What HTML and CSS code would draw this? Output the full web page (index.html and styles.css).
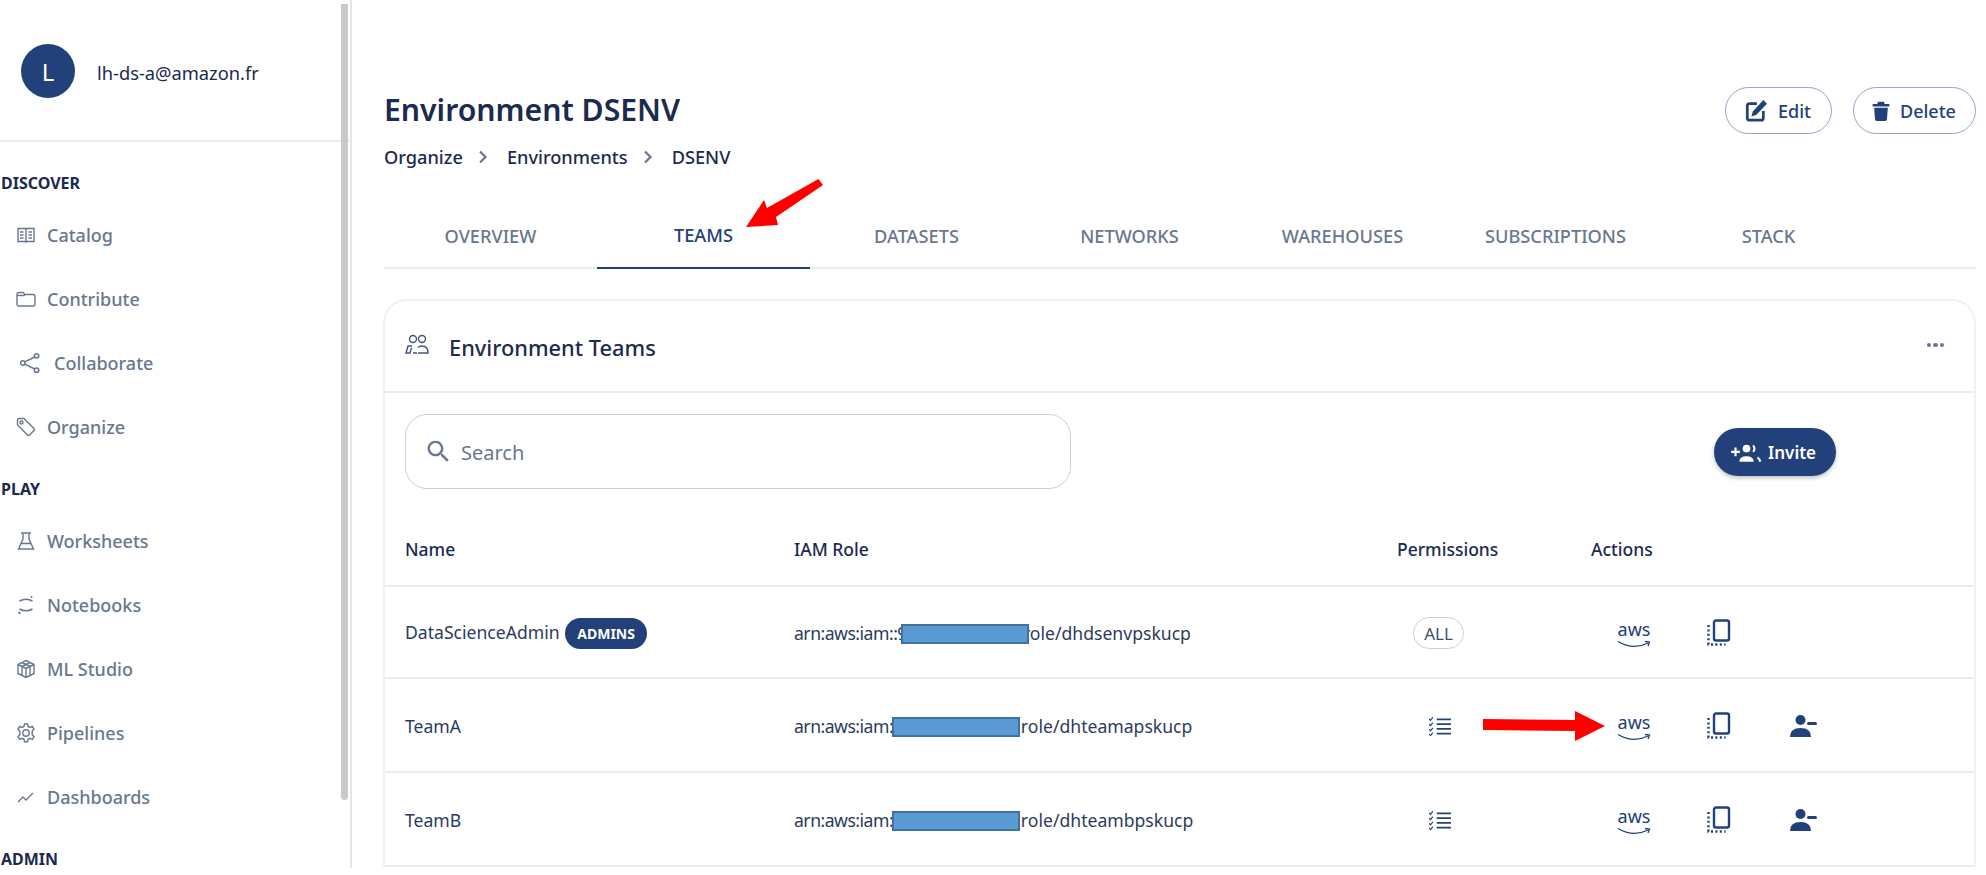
FILE: index.html
```html
<!DOCTYPE html>
<html lang="en">
<head>
  <meta charset="UTF-8">
  <meta name="viewport" content="width=device-width, initial-scale=1.0">
  <title>Environment DSENV</title>
  <link rel="stylesheet" href="styles.css">
</head>
<body>
  <div class="app">
    <aside class="sidebar">
      <div class="user">
        <div class="avatar">L</div>
        <span class="user-email">lh-ds-a@amazon.fr</span>
      </div>
      <nav class="side-nav">
        <h4 class="nav-label">DISCOVER</h4>
        <a class="nav-item">
          <svg class="nav-icon" viewBox="0 0 20 20"><path d="M2 3.500h7.500l.5.6.5-.6H18v13h-7.500l-.5.6-.5-.6H2zM10 4v12.500"/><path d="M4 7h3.500M4 10h3.500M4 13h3.500M12.500 7H16M12.500 10H16M12.500 13H16" stroke-width="1.600"/></svg>
          Catalog
        </a>
        <a class="nav-item">
          <svg class="nav-icon" viewBox="0 0 20 20"><path d="M1 5.500q0-2 2-2h4l2 2h8q2 0 2 2v7.500q0 2-2 2H3q-2 0-2-2z"/><path d="M1 6.500h8"/></svg>
          Contribute
        </a>
        <a class="nav-item nav-item-wide">
          <svg class="nav-icon" viewBox="0 0 20 20"><circle cx="3.500" cy="10" r="2"/><circle cx="16" cy="3.500" r="2"/><circle cx="16" cy="16.500" r="2"/><path d="M5.300 9l9-4.500M5.300 11l9 4.500"/></svg>
          Collaborate
        </a>
        <a class="nav-item">
          <svg class="nav-icon" viewBox="0 0 20 20"><path d="M1.500 3q0-1.500 1.500-1.500h5l10 10q1 1 0 2l-4.500 4.500q-1 1-2 0l-10-10z"/><circle cx="5.500" cy="5.500" r="1.500"/></svg>
          Organize
        </a>
        <h4 class="nav-label">PLAY</h4>
        <a class="nav-item">
          <svg class="nav-icon" viewBox="0 0 20 20"><path d="M5 2h10M7 2v6l-4.500 10h15L13 8V2M5 12.500h10"/></svg>
          Worksheets
        </a>
        <a class="nav-item">
          <svg class="nav-icon" viewBox="0 0 20 20"><path d="M3.500 6q6.500-3.500 13 0M3.500 14q6.500 3.500 13 0" stroke-width="1.700"/><circle class="dot" cx="15.500" cy="2" r="1"/><circle class="dot" cx="3.500" cy="18" r="1.200"/></svg>
          Notebooks
        </a>
        <a class="nav-item">
          <svg class="nav-icon" viewBox="0 0 20 20" stroke-width="1.700"><path d="M10 1.500l8 4v9l-8 4-8-4v-9zM2 5.500l8 4 8-4M10 9.500v9M6 3.500l8 4M14 3.500l-8 4M6 7.500v9M14 7.500v9"/></svg>
          ML Studio
        </a>
        <a class="nav-item">
          <svg class="nav-icon" viewBox="0 0 20 20"><circle cx="10" cy="10" r="3.200"/><path d="M8.500 1h3l.5 2.500 2 1 2.300-1 1.700 2.600-1.800 1.900v3.800l1.800 1.900-1.700 2.600-2.300-1-2 1-.5 2.500h-3l-.5-2.500-2-1-2.300 1-1.700-2.600 1.800-1.900V8L2 6.100l1.700-2.600 2.300 1 2-1z"/></svg>
          Pipelines
        </a>
        <a class="nav-item">
          <svg class="nav-icon" viewBox="0 0 20 20" stroke-width="1.600"><path d="M2 15l5-5 3 3 7-7"/></svg>
          Dashboards
        </a>
        <h4 class="nav-label">ADMIN</h4>
      </nav>
      <div class="scroll-thumb"></div>
    </aside>

    <main class="content">
      <div class="page-head">
        <div>
          <h1 class="page-title">Environment DSENV</h1>
          <div class="crumbs">
            <span>Organize</span>
            <svg class="crumb-sep" viewBox="0 0 10 14"><path d="M2 1.500L7.500 7 2 12.500"/></svg>
            <span>Environments</span>
            <svg class="crumb-sep" viewBox="0 0 10 14"><path d="M2 1.500L7.500 7 2 12.500"/></svg>
            <span>DSENV</span>
          </div>
        </div>
        <div class="head-actions">
          <button class="btn-outline btn-edit">
            <svg class="btn-icon" viewBox="0 0 24 24"><path class="outline" d="M13 4H5q-2.500 0-2.500 2.500v13Q2.500 22 5 22h12.500q2.500 0 2.500-2.500V12"/><path d="M20 0l4 4-11.500 12L7 18l1.500-5.500z"/></svg>
            Edit
          </button>
          <button class="btn-outline btn-delete">
            <svg class="btn-icon" viewBox="0 0 24 24"><path d="M8.500 1h7l1 2.500H22v3H2v-3h5.500zM3.800 8h16.400l-1 14q-.1 2-2 2H6.800q-1.900 0-2-2z"/></svg>
            Delete
          </button>
        </div>
      </div>

      <div class="tabs">
        <a class="tab">OVERVIEW</a>
        <a class="tab tab-active">TEAMS</a>
        <a class="tab">DATASETS</a>
        <a class="tab">NETWORKS</a>
        <a class="tab">WAREHOUSES</a>
        <a class="tab">SUBSCRIPTIONS</a>
        <a class="tab">STACK</a>
      </div>

      <section class="card">
        <div class="card-head">
          <svg class="card-icon" viewBox="0 0 24 24"><circle cx="8" cy="6" r="3.500"/><circle cx="17" cy="6" r="3.500"/><path d="M13 20h10q0-7-6-7-2.500 0-4 1.500M7 13l-4 0-2 7h4l1.500-5M8 20h4"/></svg>
          <h3 class="card-title">Environment Teams</h3>
          <span class="card-more"><i></i><i></i><i></i></span>
        </div>
        <div class="toolbar">
          <div class="search">
            <svg class="search-icon" viewBox="0 0 24 24"><path d="M15.500 14h-.79l-.28-.27C15.410 12.590 16 11.110 16 9.500 16 5.910 13.090 3 9.500 3S3 5.910 3 9.500 5.910 16 9.500 16c1.610 0 3.090-.59 4.230-1.570l.27.28v.79l5 4.990L20.490 19l-4.990-5zm-6 0C7.010 14 5 11.990 5 9.500S7.010 5 9.500 5 14 7.010 14 9.500 11.990 14 9.500 14z"/></svg>
            <span>Search</span>
          </div>
          <button class="btn-invite">
            <svg class="invite-icon" viewBox="0 0 28 20"><path class="fill" d="M0 8h3V5h2v3h3v2H5v3H3v-3H0z"/><circle cx="14" cy="6" r="3.500"/><path d="M7.500 18q0-5 6.500-5t6.500 5z"/><path d="M20 3q2.500 3 0 6M24 14q2 1.500 2.500 4"/></svg>
            Invite
          </button>
        </div>
        <table class="teams">
          <colgroup>
            <col class="col-name"><col class="col-role"><col class="col-perm"><col>
          </colgroup>
          <thead>
            <tr><th>Name</th><th>IAM Role</th><th>Permissions</th><th>Actions</th></tr>
          </thead>
          <tbody>
            <tr>
              <td>DataScienceAdmin <span class="badge">ADMINS</span></td>
              <td><span class="arn">arn:aws:iam::9</span><span class="redact redact-first"></span>role/dhdsenvpskucp</td>
              <td class="perm"><span class="pill">ALL</span></td>
              <td>
                <div class="row-actions">
                  <span class="act"><svg class="aws" viewBox="-2 -8 38 34"><text x="17" y="12">aws</text><path d="M1 17.500q15 9 30 1.500"/><path d="M28 17.500l4.500.5-1.500 4"/></svg></span>
                  <span class="act"><svg class="copy" viewBox="0 0 24 28"><rect x="7" y="1.500" width="15" height="20" rx="2"/><path d="M1.500 6v19.500h17" stroke-dasharray="2 2.400"/></svg></span>
                </div>
              </td>
            </tr>
            <tr>
              <td>TeamA</td>
              <td><span class="arn">arn:aws:iam:</span><span class="redact"></span>:role/dhteamapskucp</td>
              <td class="perm">
                <svg class="checks" viewBox="0 0 24 20"><path d="M0 2l1.500 1.500L4 .5M0 7.500L1.500 9 4 6M0 13l1.500 1.500L4 11.500M0 18l1.500 1.500L4 16.500" stroke-width="1.300"/><path d="M8 2.500h15M8 7.500h15M8 12.500h15M8 17.500h15" stroke-width="1.800"/></svg>
              </td>
              <td>
                <div class="row-actions">
                  <span class="act"><svg class="aws" viewBox="-2 -8 38 34"><text x="17" y="12">aws</text><path d="M1 17.500q15 9 30 1.500"/><path d="M28 17.500l4.500.5-1.500 4"/></svg></span>
                  <span class="act"><svg class="copy" viewBox="0 0 24 28"><rect x="7" y="1.500" width="15" height="20" rx="2"/><path d="M1.500 6v19.500h17" stroke-dasharray="2 2.400"/></svg></span>
                  <span class="act"><svg class="person" viewBox="0 0 28 24"><circle cx="10.500" cy="6" r="5"/><path d="M0 23q0-9 10.500-9T21 23z"/><rect x="17" y="8" width="10" height="3" rx="1.500"/></svg></span>
                </div>
              </td>
            </tr>
            <tr>
              <td>TeamB</td>
              <td><span class="arn">arn:aws:iam:</span><span class="redact"></span>:role/dhteambpskucp</td>
              <td class="perm">
                <svg class="checks" viewBox="0 0 24 20"><path d="M0 2l1.500 1.500L4 .5M0 7.500L1.500 9 4 6M0 13l1.500 1.500L4 11.500M0 18l1.500 1.500L4 16.500" stroke-width="1.300"/><path d="M8 2.500h15M8 7.500h15M8 12.500h15M8 17.500h15" stroke-width="1.800"/></svg>
              </td>
              <td>
                <div class="row-actions">
                  <span class="act"><svg class="aws" viewBox="-2 -8 38 34"><text x="17" y="12">aws</text><path d="M1 17.500q15 9 30 1.500"/><path d="M28 17.500l4.500.5-1.500 4"/></svg></span>
                  <span class="act"><svg class="copy" viewBox="0 0 24 28"><rect x="7" y="1.500" width="15" height="20" rx="2"/><path d="M1.500 6v19.500h17" stroke-dasharray="2 2.400"/></svg></span>
                  <span class="act"><svg class="person" viewBox="0 0 28 24"><circle cx="10.500" cy="6" r="5"/><path d="M0 23q0-9 10.500-9T21 23z"/><rect x="17" y="8" width="10" height="3" rx="1.500"/></svg></span>
                </div>
              </td>
            </tr>
          </tbody>
        </table>
      </section>
    </main>

    <!-- red annotation arrows drawn on top of the screenshot -->
    <svg class="marks" viewBox="0 0 1986 875">
      <polygon points="746,227 764,200 767,208 818.500,179 823,185 776,217 778,225"/>
      <polygon points="1483,719 1575,720 1575,711 1605,726 1575,741 1575,731 1483,730"/>
    </svg>
  </div>
</body>
</html>
```

FILE: styles.css
```css
* {
  box-sizing: border-box;
}
html, body {
  margin: 0;
  padding: 0;
  height: 100%;
  overflow: hidden;
  background: #fff;
}
body {
  font-family: "Noto Sans", "Open Sans", sans-serif;
  color: #1b2a4e;
}
.app {
  position: relative;
  display: flex;
  align-items: flex-start;
  height: 875px;
  overflow: hidden;
}

/* sidebar */
.sidebar {
  position: relative;
  flex: 0 0 352px;
  height: 868px;
  border-right: 2px solid #e6e6e6;
}
.user {
  display: flex;
  align-items: center;
  height: 142px;
  padding-left: 21px;
  padding-top: 2px;
  border-bottom: 2px solid #ececec;
}
.avatar {
  display: flex;
  align-items: center;
  justify-content: center;
  width: 54px;
  height: 54px;
  border-radius: 50%;
  background: #224079;
  color: #fff;
  font-size: 24px;
}
.user-email {
  margin-left: 22px;
  margin-top: 2px;
  font-size: 18.300px;
}
.side-nav {
  padding-top: 21px;
}
.nav-label {
  display: flex;
  align-items: center;
  height: 40px;
  margin: 10px 0 0;
  padding-left: 1px;
  font-size: 16px;
  font-weight: 700;
}
.nav-label:first-child {
  margin-top: 0;
}
.nav-item {
  display: flex;
  align-items: center;
  height: 64px;
  padding-left: 16px;
  color: #68778f;
  font-size: 18px;
  font-weight: 500;
}
.nav-icon {
  flex: none;
  width: 20px;
  height: 20px;
  margin-right: 11px;
  fill: none;
  stroke: #68778f;
  stroke-width: 1.400;
}
.nav-icon .dot {
  fill: #68778f;
  stroke: none;
}
.nav-item-wide .nav-icon {
  width: 22px;
  height: 22px;
  margin-left: 3px;
  margin-right: 13px;
}
.scroll-thumb {
  position: absolute;
  top: 4px;
  left: 341px;
  width: 7px;
  height: 796px;
  border-radius: 0 0 4px 4px;
  background: #c9c9c9;
}

/* page head */
.content {
  flex: 1;
  min-width: 0;
  padding: 87px 10px 0 32px;
}
.page-head {
  display: flex;
  justify-content: space-between;
  align-items: flex-start;
}
.page-title {
  margin: 0;
  height: 47px;
  font-size: 30.200px;
  font-weight: 600;
  line-height: 45px;
}
.crumbs {
  display: flex;
  align-items: center;
  height: 46px;
  font-size: 18.200px;
  font-weight: 500;
}
.crumb-sep {
  width: 10px;
  height: 14px;
  margin: 0 19px 0 15px;
  fill: none;
  stroke: #68778f;
  stroke-width: 2.200;
}
.head-actions {
  display: flex;
  gap: 21px;
}
.btn-outline {
  display: flex;
  align-items: center;
  height: 47px;
  border: 1px solid #95a6c6;
  border-radius: 24px;
  background: #fff;
  color: #224079;
  font: 500 18px "Noto Sans", sans-serif;
}
.btn-edit {
  width: 107px;
  padding: 0 0 0 19px;
}
.btn-delete {
  width: 123px;
  padding: 0 0 0 17px;
}
.btn-icon {
  width: 22px;
  height: 22px;
  margin-right: 11px;
  fill: #224079;
}
.btn-delete .btn-icon {
  width: 20px;
  margin-right: 9px;
}
.btn-icon .outline {
  fill: none;
  stroke: #224079;
  stroke-width: 3;
}

/* tabs */
.tabs {
  display: flex;
  height: 65px;
  margin-top: 24px;
  border-bottom: 2px solid #ececec;
}
.tab {
  display: flex;
  align-items: center;
  justify-content: center;
  flex: 0 0 213px;
  height: 65px;
  padding-bottom: 2px;
  color: #68778f;
  font-size: 18.200px;
  font-weight: 500;
}
.tab-active {
  border-bottom: 2px solid #224079;
  color: #224079;
}

/* card */
.card {
  margin-top: 30px;
  margin-left: -1px;
  border: 2px solid #f1f1f1;
  border-bottom: 0;
  border-radius: 24px 24px 0 0;
}
.card-head {
  display: flex;
  align-items: center;
  height: 92px;
  padding: 2px 30px 0 20px;
  border-bottom: 2px solid #ececec;
}
.card-icon {
  width: 24px;
  height: 24px;
  margin-top: -4px;
  margin-right: 20px;
  fill: none;
  stroke: #42557a;
  stroke-width: 1.400;
}
.card-title {
  margin: 0;
  font-size: 21.800px;
  font-weight: 500;
}
.card-more {
  display: flex;
  gap: 2px;
  margin-left: auto;
  margin-top: -4px;
}
.card-more i {
  width: 4.500px;
  height: 4.500px;
  border-radius: 50%;
  background: #68778f;
}
.toolbar {
  display: flex;
  align-items: center;
  height: 117px;
  padding: 0 138px 0 20px;
}
.search {
  display: flex;
  align-items: center;
  width: 666px;
  height: 75px;
  padding-left: 18px;
  border: 1.500px solid #cfcfcf;
  border-radius: 22px;
  color: #68778f;
  font-size: 20px;
}
.search-icon {
  width: 29px;
  height: 29px;
  margin-right: 8px;
  fill: #68778f;
}
.search span {
  padding-top: 2px;
}
.btn-invite {
  display: flex;
  align-items: center;
  justify-content: center;
  width: 122px;
  height: 48px;
  margin-left: auto;
  padding: 2px 0 0;
  border: 0;
  border-radius: 24px;
  background: #224079;
  box-shadow: 0 2px 4px rgba(0, 0, 0, 0.25);
  color: #fff;
  font: 600 17px "Noto Sans", sans-serif;
}
.invite-icon {
  width: 31px;
  height: 22px;
  margin-right: 6px;
  margin-left: -3px;
  fill: #fff;
  stroke: none;
}
.invite-icon path:last-child {
  fill: none;
  stroke: #fff;
  stroke-width: 1.800;
}

/* table */
.teams {
  width: 100%;
  border-collapse: collapse;
  table-layout: fixed;
}
.col-name {
  width: 387px;
}
.col-role {
  width: 603px;
}
.col-perm {
  width: 194px;
}
.teams th {
  height: 76px;
  padding: 2px 0 0 22px;
  border-bottom: 2px solid #ececec;
  text-align: left;
  font-size: 17.500px;
  font-weight: 500;
}
.teams th:first-child,
.teams td:first-child {
  padding-left: 20px;
}
.teams td {
  height: 94px;
  padding: 2px 0 0 22px;
  border-bottom: 2px solid #ececec;
  color: #2c3b5c;
  font-size: 17.600px;
}
.teams tbody tr:first-child td {
  height: 92px;
}
.badge {
  display: inline-block;
  height: 31px;
  margin-left: 1px;
  padding: 0 12px;
  border-radius: 16px;
  background: #224079;
  color: #fff;
  font-size: 14px;
  font-weight: 700;
  line-height: 31px;
  vertical-align: 0;
}
.arn {
  letter-spacing: -0.5px;
}
.redact {
  position: relative;
  z-index: 1;
  display: inline-block;
  width: 128px;
  height: 20px;
  margin-left: -1px;
  margin-right: -4px;
  border: 2px solid #41719c;
  background: #5b9bd5;
  vertical-align: -4px;
}
.redact-first {
  margin-left: -6px;
  margin-right: -6px;
}
.teams .perm {
  padding-left: 38px;
}
.pill {
  display: flex;
  align-items: center;
  justify-content: center;
  width: 51px;
  height: 32px;
  border: 1.500px solid #d0d0d0;
  border-radius: 16px;
  color: #3e4e6e;
  font-size: 17px;
}
.checks {
  display: block;
  width: 23px;
  height: 19px;
  margin-left: 16px;
  fill: none;
  stroke: #224079;
}
.row-actions {
  display: flex;
}
.act {
  display: flex;
  align-items: center;
  justify-content: center;
  flex: 0 0 85px;
  height: 34px;
}
.aws {
  width: 38px;
  height: 34px;
  fill: none;
  stroke: #224079;
  stroke-width: 1.300;
}
.aws text {
  fill: #224079;
  stroke: none;
  font-size: 18px;
  text-anchor: middle;
}
.copy {
  width: 24px;
  height: 28px;
  fill: none;
  stroke: #224079;
  stroke-width: 2.400;
}
.person {
  width: 28px;
  height: 24px;
  fill: #224079;
}

/* annotations */
.marks {
  position: absolute;
  top: 0;
  left: 0;
  width: 1986px;
  height: 875px;
  pointer-events: none;
}
.marks polygon {
  fill: #fe0000;
}
```
